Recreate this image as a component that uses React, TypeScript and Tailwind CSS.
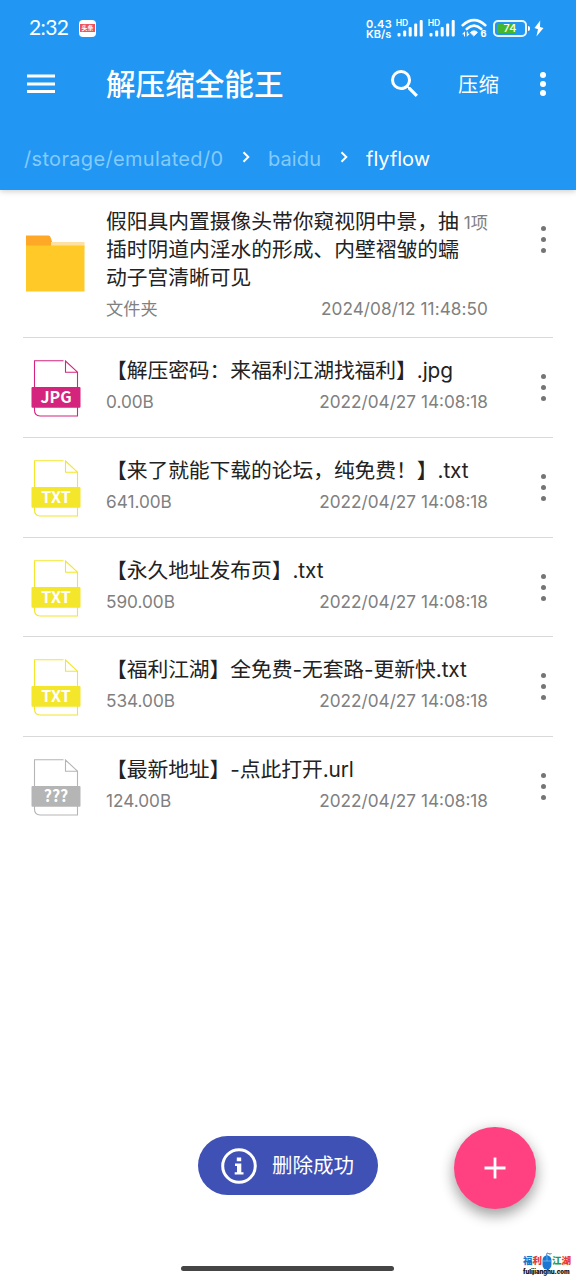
import { clsx } from 'clsx';

interface FileEntry {
  name: string;
  size: string;
  date: string;
  type: 'JPG' | 'TXT' | '???';
}

const files: FileEntry[] = [
  { name: '【解压密码：来福利江湖找福利】.jpg', size: '0.00B', date: '2022/04/27 14:08:18', type: 'JPG' },
  { name: '【来了就能下载的论坛，纯免费！】.txt', size: '641.00B', date: '2022/04/27 14:08:18', type: 'TXT' },
  { name: '【永久地址发布页】.txt', size: '590.00B', date: '2022/04/27 14:08:18', type: 'TXT' },
  { name: '【福利江湖】全免费-无套路-更新快.txt', size: '534.00B', date: '2022/04/27 14:08:18', type: 'TXT' },
  { name: '【最新地址】-点此打开.url', size: '124.00B', date: '2022/04/27 14:08:18', type: '???' },
];

const typeColors = {
  JPG: '#d4247e',
  TXT: '#f3e62b',
  '???': '#b5b5b5',
};

function Dots({ className }: { className?: string }) {
  return (
    <span className={clsx('flex flex-col items-center gap-[6px]', className)}>
      <i className="size-[5px] rounded-full bg-current" />
      <i className="size-[5px] rounded-full bg-current" />
      <i className="size-[5px] rounded-full bg-current" />
    </span>
  );
}

function FileIcon({ type }: { type: FileEntry['type'] }) {
  const color = typeColors[type];
  return (
    <svg width="50" height="57" viewBox="0 0 50 57" fill="none">
      <path
        d="M3.5 27V0.8H32.5M46.5 27V12.2H34.5V1L46.5 12.2M46.5 47V56H9Q3.5 56 3.5 50V47"
        stroke={color}
        strokeWidth="1.1"
      />
      <rect x="0.5" y="27" width="49" height="20.7" rx="1" fill={color} />
      <text
        x="25"
        y="43.2"
        textAnchor="middle"
        fill="#fff"
        fontSize="16"
        fontWeight="700"
        fontFamily="'Noto Sans CJK SC', 'Noto Sans', sans-serif"
      >
        {type}
      </text>
    </svg>
  );
}

function FolderIcon() {
  return (
    <svg width="59" height="57" viewBox="0 0 59 57">
      <path d="M0 0.5H22.5Q24 0.5 24.5 2L27 9.5V14H0Z" fill="#ffa726" />
      <path d="M25 7H58.5V14H25Z" fill="#ffe0a3" />
      <path d="M0 10.5H58.5V56.5H0Z" fill="#ffca28" />
    </svg>
  );
}

function Signal() {
  return (
    <svg width="28" height="20" viewBox="0 0 28 20" fill="#fff">
      <text x="-0.3" y="7.6" fontSize="8.6" fontWeight="600" fontFamily="Inter, sans-serif">HD</text>
      <rect x="1.5" y="15" width="3" height="3.5" rx="1" />
      <rect x="7.2" y="12.5" width="3" height="6" rx="1" />
      <rect x="12.7" y="9" width="3" height="9.5" rx="1" />
      <rect x="18.2" y="5.5" width="3" height="13" rx="1" />
      <rect x="23.7" y="2" width="3" height="16.5" rx="1" />
    </svg>
  );
}

function StatusBar() {
  return (
    <div className="flex h-14 items-center pr-8 pl-[29px]">
      <span className="-mt-[3px] w-[50px] font-[Lato] text-[21px] leading-none tracking-[-0.6px]">2:32</span>
      <span className="flex size-[17px] items-center justify-center rounded-[4px] bg-white">
        <span className="flex h-[8px] w-[15px] items-center justify-center bg-[#ef5261] text-[6px] leading-none font-bold whitespace-nowrap">
          头条
        </span>
      </span>
      <span className="ml-auto flex items-center">
        <span className="mt-[2px] w-[30px] text-[11px] leading-[10px] font-semibold whitespace-nowrap">
          <span className="block tracking-[0.3px]">0.43</span>
          <span className="block">KB/s</span>
        </span>
        <Signal />
        <span className="w-[4px]" />
        <Signal />
        <svg className="ml-[5px]" width="27" height="20" viewBox="0 0 27 20" fill="none" stroke="#fff" strokeLinecap="round">
          <path d="M1.7 7.2Q13 -3 24.3 7.2" strokeWidth="2.6" />
          <path d="M5.7 11Q13 4.4 20.3 11" strokeWidth="2.6" />
          <path d="M9.6 14.4Q13 11.2 16.4 14.4L13 17.7Z" fill="#fff" strokeWidth="1" />
          <path d="M3.5 18V14.5L2 16M6.3 14V17.5L7.8 16" strokeWidth="1.1" />
          <text x="19.6" y="18.7" fill="#fff" stroke="none" fontSize="9" fontWeight="800" fontFamily="Inter, sans-serif">6</text>
        </svg>
        <span className="ml-[5px] flex h-[17px] w-[34px] items-center rounded-[5px] border-2 border-white/90 p-[2px]">
          <span className="flex h-full w-full items-center justify-center rounded-[2px] bg-linear-to-r from-[#43b82d] from-75% to-transparent to-75% text-[11px] leading-none font-medium">
            74
          </span>
        </span>
        <i className="ml-px h-[5px] w-[2px] rounded-r bg-white" />
        <svg className="ml-[4px]" width="10" height="17" viewBox="0 0 10 17" fill="#fff">
          <path d="M6.2 0.5L0.5 8L4 9.2L2.4 16.5L9.5 8L6 6.9Z" />
        </svg>
      </span>
    </div>
  );
}

function Toolbar() {
  return (
    <div className="flex h-14 items-center pl-[27px]">
      <svg className="-mt-px" width="28" height="20" viewBox="0 0 28 20" fill="#fff">
        <rect y="0.5" width="28" height="3" />
        <rect y="8.5" width="28" height="3" />
        <rect y="16" width="28" height="3" />
      </svg>
      <h1 className="mt-[2px] ml-[51px] w-[285px] text-[29.6px] leading-none font-medium">解压缩全能王</h1>
      <svg className="-mt-px" width="27" height="27" viewBox="3 3 17.5 17.5" fill="#fff">
        <path d="M15.5 14h-.79l-.28-.27A6.471 6.471 0 0 0 16 9.5 6.5 6.5 0 1 0 9.5 16c1.61 0 3.09-.59 4.23-1.57l.27.28v.79l5 4.99L20.49 19l-4.99-5zm-6 0C7.01 14 5 11.99 5 9.5S7.01 5 9.5 5 14 7.01 14 9.5 11.99 14 9.5 14z" />
      </svg>
      <span className="mt-[2px] ml-[40px] w-[82px] text-[20.5px] leading-none">压缩</span>
      <span className="flex flex-col gap-[3px]">
        <i className="size-[6px] rounded-full bg-white" />
        <i className="size-[6px] rounded-full bg-white" />
        <i className="size-[6px] rounded-full bg-white" />
      </span>
    </div>
  );
}

function Chevron() {
  return (
    <svg className="-mt-[3px]" width="8" height="12" viewBox="0 0 8 12" fill="none" stroke="#fff" strokeWidth="2">
      <path d="M1.5 1.2L6.3 6L1.5 10.8" />
    </svg>
  );
}

function Breadcrumb() {
  return (
    <div className="flex h-[78px] items-center pt-[15px] pl-6 text-[20px] leading-none whitespace-nowrap">
      <span className="w-[218px] tracking-[0.33px] text-[#83cbfb]">/storage/emulated/0</span>
      <Chevron />
      <span className="ml-[18px] w-[72px] tracking-[0.1px] text-[#83cbfb]">baidu</span>
      <Chevron />
      <span className="ml-[18px]">flyflow</span>
    </div>
  );
}

function FileRow({ file }: { file: FileEntry }) {
  return (
    <li className="mx-[23px] flex h-[99.8px] border-b border-[#d9d9d9] last:border-b-0">
      <span className="mt-[22px] ml-2 w-[75px]">
        <FileIcon type={file.type} />
      </span>
      <div className="w-[382px]">
        <p className="mt-[19px] text-[20.8px] leading-[28px] tracking-[-0.08px] whitespace-nowrap text-[#222]">{file.name}</p>
        <p className="mt-[5px] flex justify-between text-[17.2px] leading-6 text-[#808080]">
          <span>{file.size}</span>
          <span>{file.date}</span>
        </p>
      </div>
      <Dots className="mt-[36px] ml-[53px] text-[#757575]" />
    </li>
  );
}

export default function App() {
  return (
    <div className="relative h-[1280px] w-[576px] overflow-hidden bg-white font-[Inter,'Noto_Sans_CJK_SC',sans-serif]">
      <header className="h-[190px] bg-[#2196f3] text-white shadow-[0_1px_6px_rgba(0,0,0,0.22)]">
        <StatusBar />
        <Toolbar />
        <Breadcrumb />
      </header>

      <ul>
        <li className="mx-[23px] flex h-[148px] border-b border-[#d9d9d9]">
          <span className="mt-[45px] ml-[3px] w-[80px]">
            <FolderIcon />
          </span>
          <div className="w-[382px]">
            <div className="mt-[18px] flex justify-between">
              <p className="w-[356px] text-[20.75px] leading-[27.8px] whitespace-nowrap text-[#222]">
                假阳具内置摄像头带你窥视阴中景，抽
                <br />
                插时阴道内淫水的形成、内壁褶皱的蠕
                <br />
                动子宫清晰可见
              </p>
              <span className="text-[17.2px] leading-[29px] whitespace-nowrap text-[#808080]">1项</span>
            </div>
            <p className="mt-[6px] flex justify-between text-[17.2px] leading-6 text-[#808080]">
              <span>文件夹</span>
              <span className="tracking-[0.07px]">2024/08/12 11:48:50</span>
            </p>
          </div>
          <Dots className="mt-[36px] ml-[53px] text-[#757575]" />
        </li>
        {files.map((file) => (
          <FileRow key={file.name} file={file} />
        ))}
      </ul>

      {/* Toast */}
      <div className="absolute top-[1136px] left-[198px] flex h-[59px] w-[180px] items-center rounded-full bg-[#3f51b5] pl-[23px] text-white">
        <svg width="36" height="36" viewBox="0 0 36 36" fill="none">
          <circle cx="18" cy="18" r="16.3" stroke="#fff" strokeWidth="3" />
          <path d="M15.8 9.5h4.4v3.7h-4.4zM14 15.5h6.3v8.7h2.2v2.3H13.7v-2.3h2.3v-6.3h-2z" fill="#fff" />
        </svg>
        <span className="mt-[2px] ml-[15px] text-[20.5px] leading-none">删除成功</span>
      </div>

      {/* Floating action button */}
      <button className="absolute top-[1127px] left-[454px] flex size-[82px] items-center justify-center rounded-full bg-[#ff4081] shadow-[0_7px_14px_rgba(0,0,0,0.3),0_2px_16px_rgba(0,0,0,0.12)]">
        <svg width="22" height="22" viewBox="0 0 22 22" stroke="#fff" strokeWidth="2.8">
          <path d="M11 0.5V21.5M0.5 11H21.5" />
        </svg>
      </button>

      {/* Navigation handle */}
      <div className="absolute top-[1266px] left-[181px] h-[5px] w-[213px] rounded-full bg-[#454545]" />

      {/* Site badge */}
      <div className="absolute top-[1251px] left-[523px] w-[48px] whitespace-nowrap">
        <div className="flex h-[19px] items-center text-[9.5px] leading-none font-black">
          <span className="text-[#1976c9]">福</span>
          <span className="text-[#e53935]">利</span>
          <svg width="10" height="18" viewBox="0 0 10 18" fill="none">
            <path d="M5 4Q4 0 6.5 1.5T9.5 1" stroke="#1976c9" />
            <rect x="0.5" y="3.5" width="9" height="14" rx="4.5" fill="#1976d2" />
            <path d="M0.5 9H9.5M5 4V9" stroke="#7fc4f5" strokeWidth="0.7" />
          </svg>
          <span className="text-[#249b49]">江</span>
          <span className="text-[#e53935]">湖</span>
        </div>
        <div className="-mt-px text-[6px] leading-[6px] font-black tracking-[-0.1px] text-[#111]">fulijianghu.com</div>
      </div>
    </div>
  );
}
